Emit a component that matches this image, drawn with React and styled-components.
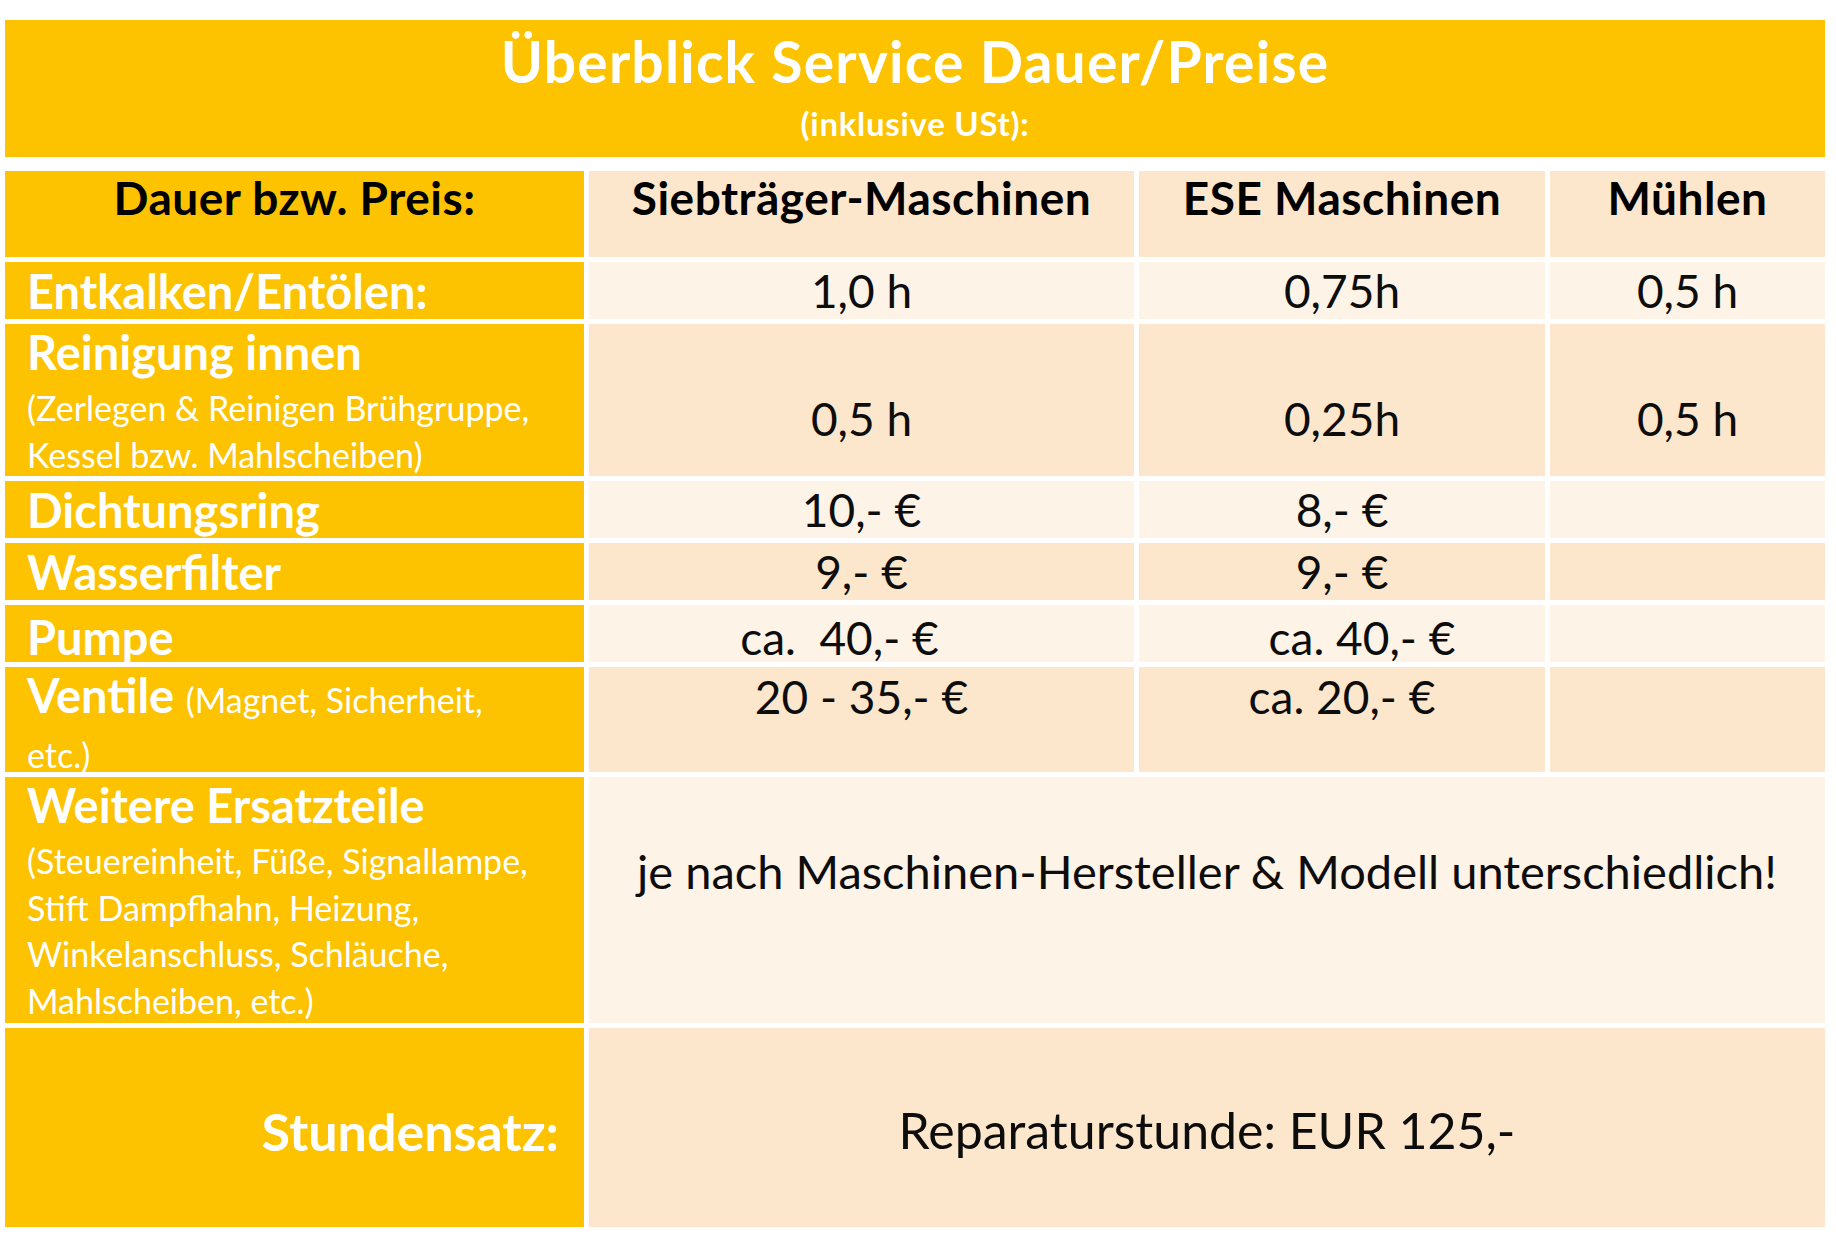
import React from "react";
import styled, { createGlobalStyle } from "styled-components";

const GlobalStyle = createGlobalStyle`
  html, body {
    margin: 0;
    padding: 0;
    background: #ffffff;
  }
  body {
    font-family: Lato, "Open Sans", sans-serif;
  }
`;

const YELLOW = "#fdc200";
const PEACH_DARK = "#fde7cc";
const PEACH_LIGHT = "#fef3e7";

const Page = styled.div`
  width: 1836px;
  padding: 20px 11px 0 5px;
  box-sizing: border-box;
`;

const TitleBand = styled.header`
  height: 137px;
  background: ${YELLOW};
  display: flex;
  flex-direction: column;
  align-items: center;
  padding-top: 11px;
  box-sizing: border-box;
  color: #ffffff;
  font-weight: 700;
`;

const Title = styled.h1`
  margin: 0;
  font-size: 57px;
  line-height: 60px;
  letter-spacing: 1.2px;
  font-weight: 700;
`;

const SubTitle = styled.div`
  margin-top: 16px;
  font-size: 33px;
  line-height: 32px;
  letter-spacing: 0.7px;
`;

const Table = styled.div`
  margin-top: 14px;
  display: grid;
  grid-template-columns: 579px 545px 406px 275px;
  grid-template-rows: 86px 57px 152px 57px 57px 57px 105px 246px 199px;
  column-gap: 5px;
  row-gap: 5px;
`;

const HeadCell = styled.div`
  background: ${(p) => (p.$yellow ? YELLOW : PEACH_DARK)};
  color: #000000;
  font-weight: 700;
  font-size: 46px;
  line-height: 48px;
  letter-spacing: 0.5px;
  text-align: center;
  padding-top: 3px;
  box-sizing: border-box;
`;

const LabelCell = styled.div`
  background: ${YELLOW};
  color: #ffffff;
  display: flex;
  flex-direction: column;
  justify-content: ${(p) => (p.$top ? "flex-start" : "center")};
  align-items: ${(p) => (p.$right ? "flex-end" : "flex-start")};
  padding: ${(p) => p.$pt || 0}px ${(p) => (p.$right ? 25 : 0)}px 0
    ${(p) => (p.$right ? 0 : 22)}px;
  box-sizing: border-box;
`;

const Label = styled.div`
  font-weight: 700;
  font-size: ${(p) => p.$size || 47}px;
  line-height: ${(p) => p.$lh || 54}px;
  white-space: nowrap;
`;

const Note = styled.span`
  font-weight: 400;
  font-size: 34px;
`;

const NoteBlock = styled.div`
  margin-top: 6px;
  font-size: 34px;
  line-height: 46.5px;
  font-weight: 400;
  white-space: nowrap;
`;

const ValueCell = styled.div`
  grid-column: ${(p) => p.$span || "auto"};
  background: ${(p) => (p.$light ? PEACH_LIGHT : PEACH_DARK)};
  color: #0d0d0d;
  font-size: ${(p) => p.$size || 46}px;
  line-height: 55px;
  display: flex;
  justify-content: center;
  align-items: ${(p) => (p.$top ? "flex-start" : "center")};
  padding-top: ${(p) => p.$pt || 0}px;
  box-sizing: border-box;
  white-space: pre;
`;

const Shift = styled.span`
  position: relative;
  left: ${(p) => p.$x || 0}px;
`;

export default function App() {
  return (
    <Page>
      <GlobalStyle />
      <TitleBand>
        <Title>Überblick Service Dauer/Preise</Title>
        <SubTitle>(inklusive USt):</SubTitle>
      </TitleBand>

      <Table>
        <HeadCell $yellow>Dauer bzw. Preis:</HeadCell>
        <HeadCell>Siebträger-Maschinen</HeadCell>
        <HeadCell>ESE Maschinen</HeadCell>
        <HeadCell>Mühlen</HeadCell>

        <LabelCell>
          <Label $lh={50}>Entkalken/Entölen:</Label>
        </LabelCell>
        <ValueCell $light>1,0 h</ValueCell>
        <ValueCell $light>0,75h</ValueCell>
        <ValueCell $light>0,5 h</ValueCell>

        <LabelCell $top $pt={1}>
          <Label>Reinigung innen</Label>
          <NoteBlock>
            (Zerlegen &amp; Reinigen Brühgruppe,
            <br />
            Kessel bzw. Mahlscheiben)
          </NoteBlock>
        </LabelCell>
        <ValueCell $pt={36}>0,5 h</ValueCell>
        <ValueCell $pt={36}>0,25h</ValueCell>
        <ValueCell $pt={36}>0,5 h</ValueCell>

        <LabelCell>
          <Label $lh={50}>Dichtungsring</Label>
        </LabelCell>
        <ValueCell $light>10,- €</ValueCell>
        <ValueCell $light>8,- €</ValueCell>
        <ValueCell $light />

        <LabelCell>
          <Label $lh={50}>Wasserfilter</Label>
        </LabelCell>
        <ValueCell>9,- €</ValueCell>
        <ValueCell>9,- €</ValueCell>
        <ValueCell />

        <LabelCell $pt={6}>
          <Label $lh={48}>Pumpe</Label>
        </LabelCell>
        <ValueCell $light $pt={8}>
          <Shift $x={-22}>ca.  40,- €</Shift>
        </ValueCell>
        <ValueCell $light $pt={8}>
          <Shift $x={20}>ca. 40,- €</Shift>
        </ValueCell>
        <ValueCell $light />

        <LabelCell $top $pt={3}>
          <Label $lh={50}>
            Ventile <Note>(Magnet, Sicherheit,</Note>
            <br />
            <Note>etc.)</Note>
          </Label>
        </LabelCell>
        <ValueCell $top $pt={2}>
          20 - 35,- €
        </ValueCell>
        <ValueCell $top $pt={2}>
          ca. 20,- €
        </ValueCell>
        <ValueCell />

        <LabelCell $top $pt={1}>
          <Label>Weitere Ersatzteile</Label>
          <NoteBlock>
            (Steuereinheit, Füße, Signallampe,
            <br />
            Stift Dampfhahn, Heizung,
            <br />
            Winkelanschluss, Schläuche,
            <br />
            Mahlscheiben, etc.)
          </NoteBlock>
        </LabelCell>
        <ValueCell $light $span="2 / span 3" $top $pt={67} $size={47}>
          je nach Maschinen-Hersteller &amp; Modell unterschiedlich!
        </ValueCell>

        <LabelCell $right $pt={6}>
          <Label $size={52}>Stundensatz:</Label>
        </LabelCell>
        <ValueCell $span="2 / span 3" $pt={6} $size={50}>
          Reparaturstunde: EUR 125,-
        </ValueCell>
      </Table>
    </Page>
  );
}
